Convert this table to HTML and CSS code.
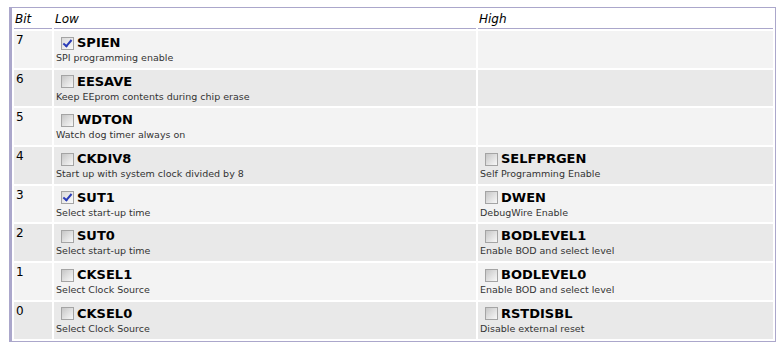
FILE: index.html
```html
<!DOCTYPE html>
<html>
<head>
<meta charset="utf-8">
<link rel="stylesheet" href="styles.css">
</head>
<body>
<table class="fuses">
  <colgroup><col class="c-bit"><col class="c-low"><col class="c-high"></colgroup>
  <thead>
    <tr><th>Bit</th><th>Low</th><th>High</th></tr>
  </thead>
  <tbody>
    <tr class="odd">
      <td class="bit">7</td>
      <td><div class="fuse"><span class="cb on"></span><b>SPIEN</b></div><div class="desc">SPI programming enable</div></td>
      <td></td>
    </tr>
    <tr class="even">
      <td class="bit">6</td>
      <td><div class="fuse"><span class="cb"></span><b>EESAVE</b></div><div class="desc">Keep EEprom contents during chip erase</div></td>
      <td></td>
    </tr>
    <tr class="odd">
      <td class="bit">5</td>
      <td><div class="fuse"><span class="cb"></span><b>WDTON</b></div><div class="desc">Watch dog timer always on</div></td>
      <td></td>
    </tr>
    <tr class="even">
      <td class="bit">4</td>
      <td><div class="fuse"><span class="cb"></span><b>CKDIV8</b></div><div class="desc">Start up with system clock divided by 8</div></td>
      <td><div class="fuse"><span class="cb"></span><b>SELFPRGEN</b></div><div class="desc">Self Programming Enable</div></td>
    </tr>
    <tr class="odd">
      <td class="bit">3</td>
      <td><div class="fuse"><span class="cb on"></span><b>SUT1</b></div><div class="desc">Select start-up time</div></td>
      <td><div class="fuse"><span class="cb"></span><b>DWEN</b></div><div class="desc">DebugWire Enable</div></td>
    </tr>
    <tr class="even">
      <td class="bit">2</td>
      <td><div class="fuse"><span class="cb"></span><b>SUT0</b></div><div class="desc">Select start-up time</div></td>
      <td><div class="fuse"><span class="cb"></span><b>BODLEVEL1</b></div><div class="desc">Enable BOD and select level</div></td>
    </tr>
    <tr class="odd">
      <td class="bit">1</td>
      <td><div class="fuse"><span class="cb"></span><b>CKSEL1</b></div><div class="desc">Select Clock Source</div></td>
      <td><div class="fuse"><span class="cb"></span><b>BODLEVEL0</b></div><div class="desc">Enable BOD and select level</div></td>
    </tr>
    <tr class="even">
      <td class="bit">0</td>
      <td><div class="fuse"><span class="cb"></span><b>CKSEL0</b></div><div class="desc">Select Clock Source</div></td>
      <td><div class="fuse"><span class="cb"></span><b>RSTDISBL</b></div><div class="desc">Disable external reset</div></td>
    </tr>
  </tbody>
</table>
</body>
</html>
```
FILE: styles.css
```css
html, body {
  margin: 0;
  padding: 0;
  background: #fff;
}
body {
  padding: 7px 0 0 9px;
  font-family: "DejaVu Sans", Verdana, sans-serif;
  color: #000;
}
.fuses {
  width: 764px;
  border-collapse: separate;
  border-spacing: 2px;
  border-style: solid;
  border-color: #aba7cb;
  border-width: 1px 1px 1px 3px;
  table-layout: fixed;
}
.c-bit { width: 38px; }
.c-low { width: 422px; }
.c-high { width: 295px; }
.fuses th {
  font-weight: normal;
  font-style: italic;
  font-size: 12px;
  text-align: left;
  height: 18px;
  padding: 0 1px;
  border-bottom: 1px solid #aba7cb;
  vertical-align: middle;
}
.fuses td {
  height: 36.7px;
  padding: 0 2px;
  vertical-align: top;
  box-sizing: border-box;
}
.fuses tr.odd td { background: #f3f3f3; }
.fuses tr.even td { background: #e9e9e9; }
.bit {
  font-size: 12px;
  line-height: 14px;
  padding-top: 2px !important;
}
.fuse {
  display: flex;
  align-items: center;
  height: 16px;
  margin-top: 4px;
}
.fuse b {
  font-size: 13px;
  font-weight: bold;
  color: #000;
  line-height: 16px;
}
.cb {
  display: inline-block;
  width: 11px;
  height: 11px;
  margin: 0 3px 0 5px;
  border: 1px solid #a4a4a4;
  background: linear-gradient(135deg, #c6c6c6 0%, #e2e2e2 55%, #f8f8f8 100%);
  position: relative;
}
.cb.on {
  background: linear-gradient(135deg, #dadada 0%, #ececec 55%, #fafafa 100%);
}
.cb.on::after {
  content: "";
  position: absolute;
  left: 3px;
  top: 0px;
  width: 3px;
  height: 7px;
  border: solid #2a3cb8;
  border-width: 0 2px 2px 0;
  transform: rotate(40deg);
}
.desc {
  font-size: 9.5px;
  color: #333;
  margin-top: 1px;
  line-height: 12px;
}
```
